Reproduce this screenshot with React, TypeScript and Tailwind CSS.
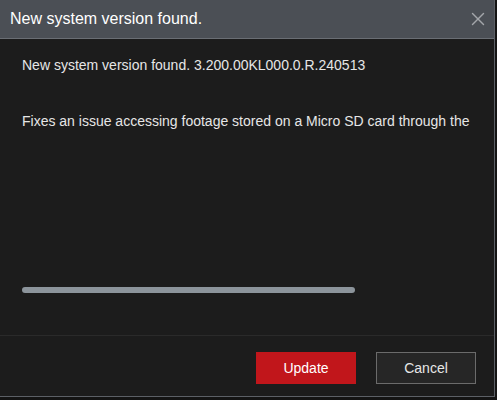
import { X } from 'lucide-react';

export default function App() {
  return (
    <div className="w-[497px] h-[400px] bg-[#141414]" style={{ fontFamily: '"Liberation Sans", Arial, sans-serif' }}>
      <div className="w-[495px] h-[397px] flex flex-col bg-[#1c1c1c] border-r border-b border-[#5c6066]">
        {/* Header */}
        <div className="h-[39px] shrink-0 flex items-center justify-between pl-[10px] pr-[5px] bg-[#4b4f55] border-b border-[#6a6e74]">
          <span className="text-[16px] text-white">New system version found.</span>
          <X className="w-[22px] h-[22px] text-[#a3a6aa]" strokeWidth={1.5} />
        </div>

        {/* Body */}
        <div className="flex-1 flex flex-col px-[22px] pt-[18px] text-[14px] text-[#e6e6e6]">
          <p className="leading-[17px]">New system version found. 3.200.00KL000.0.R.240513</p>
          <p className="leading-[17px] mt-[39px] whitespace-nowrap overflow-hidden">
            Fixes an issue accessing footage stored on a Micro SD card through the
          </p>
          <div className="mt-[157px] w-[333px] h-[6px] rounded-full bg-[#8c949b]" />
        </div>

        {/* Footer */}
        <div className="h-[61px] shrink-0 flex items-start justify-end gap-[20px] pt-[16px] pr-[18px] border-t border-[#2a2a2a]">
          <button className="w-[100px] h-[32px] bg-[#c1161b] text-white text-[14px]">Update</button>
          <button className="w-[100px] h-[32px] bg-[#262626] border border-[#6b6b6b] text-[#e6e6e6] text-[14px]">Cancel</button>
        </div>
      </div>
    </div>
  );
}
